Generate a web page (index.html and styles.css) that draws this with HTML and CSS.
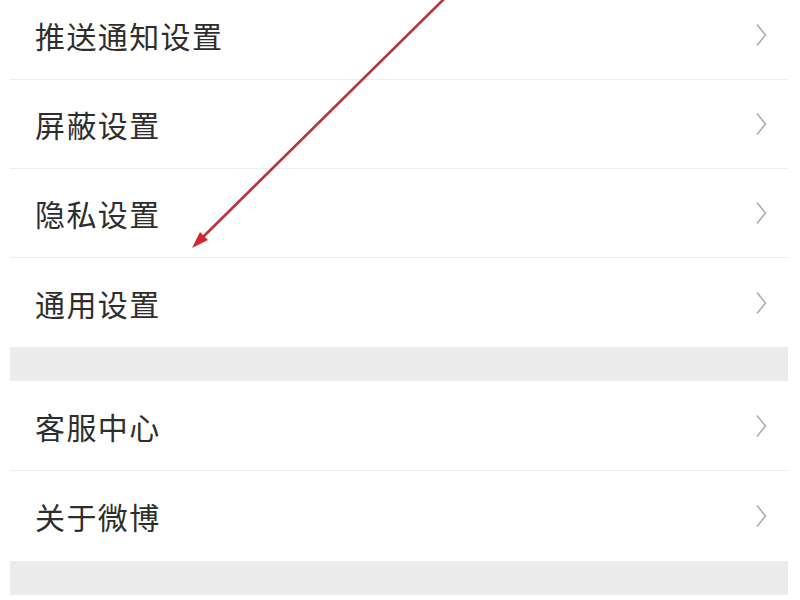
FILE: index.html
```html
<!DOCTYPE html>
<html lang="zh-CN">
<head>
<meta charset="utf-8">
<title>设置</title>
<link rel="stylesheet" href="styles.css">
</head>
<body>
<div class="page">
  <div class="group first">
    <div class="row"><span class="label">推送通知设置</span><svg class="chev" width="11" height="24" viewBox="0 0 11 24"><polyline points="1,1.5 9.5,12 1,22.5" /></svg></div>
    <div class="row"><span class="label">屏蔽设置</span><svg class="chev" width="11" height="24" viewBox="0 0 11 24"><polyline points="1,1.5 9.5,12 1,22.5" /></svg></div>
    <div class="row"><span class="label">隐私设置</span><svg class="chev" width="11" height="24" viewBox="0 0 11 24"><polyline points="1,1.5 9.5,12 1,22.5" /></svg></div>
    <div class="row"><span class="label">通用设置</span><svg class="chev" width="11" height="24" viewBox="0 0 11 24"><polyline points="1,1.5 9.5,12 1,22.5" /></svg></div>
  </div>
  <div class="band"></div>
  <div class="group second">
    <div class="row"><span class="label">客服中心</span><svg class="chev" width="11" height="24" viewBox="0 0 11 24"><polyline points="1,1.5 9.5,12 1,22.5" /></svg></div>
    <div class="row"><span class="label">关于微博</span><svg class="chev" width="11" height="24" viewBox="0 0 11 24"><polyline points="1,1.5 9.5,12 1,22.5" /></svg></div>
  </div>
  <div class="band"></div>
</div>
<svg class="arrow" width="800" height="600" viewBox="0 0 800 600">
  <line x1="446" y1="-3" x2="201" y2="239" />
  <polygon points="192,248 208,240 200,232" />
</svg>
</body>
</html>
```
FILE: styles.css
```css
html, body {
  margin: 0;
  padding: 0;
  background: #ffffff;
  width: 800px;
  height: 600px;
  overflow: hidden;
}
body {
  position: relative;
  font-family: "Noto Sans CJK SC", "Noto Sans", sans-serif;
}
.page {
  margin: 0 12px 0 10px;
}
.group.first {
  margin-top: -9px;
}
.row {
  height: 88px;
  border-bottom: 1px solid #eeeeee;
  display: flex;
  align-items: center;
  justify-content: space-between;
  padding: 0 21px 0 25px;
}
.row:last-child {
  border-bottom: none;
  height: 89px;
}
.second .row {
  height: 89px;
}
.second .row:last-child {
  height: 90px;
}
.label {
  font-size: 30px;
  color: #2e2e2e;
  letter-spacing: 1.4px;
  line-height: 1;
  padding-top: 0;
}
.chev {
  display: block;
}
.chev polyline {
  fill: none;
  stroke: #adadad;
  stroke-width: 1.6;
}
.band {
  height: 34px;
  background: #ececec;
}
.arrow {
  position: absolute;
  left: 0;
  top: 0;
  pointer-events: none;
}
.arrow line {
  stroke: #b8333a;
  stroke-width: 2.6;
}
.arrow polygon {
  fill: #d4262e;
}
```
